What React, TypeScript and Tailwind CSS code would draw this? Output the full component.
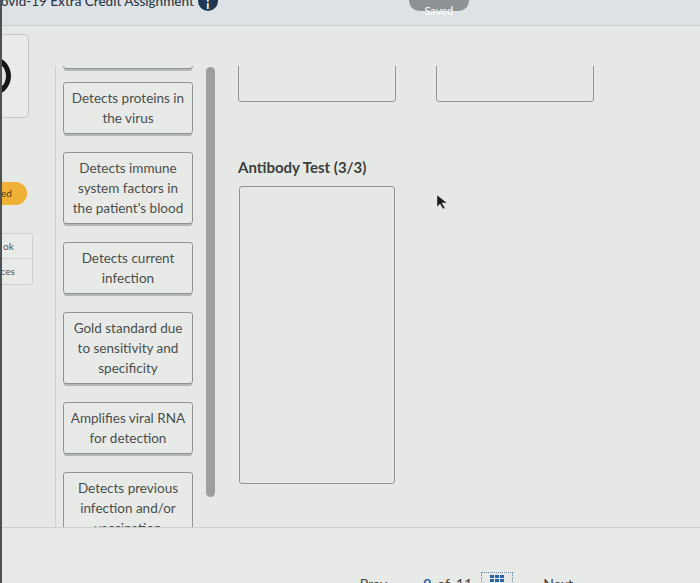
import React from 'react';

const cards = [
  ['Detects proteins in', 'the virus'],
  ['Detects immune', 'system factors in', "the patient's blood"],
  ['Detects current', 'infection'],
  ['Gold standard due', 'to sensitivity and', 'specificity'],
  ['Amplifies viral RNA', 'for detection'],
  ['Detects previous', 'infection and/or', 'vaccination'],
];

function Card({ lines }: { lines: string[] }) {
  return (
    <div className="w-[130px] shrink-0 rounded-[3px] border border-[#8f9594] bg-[#e8eae7] px-1 py-[5px] text-center text-[13.5px] leading-[20px] text-[#4a4e4d] shadow-[0_3px_0_-1px_#b3b7b6]">
      {lines.map((l) => (
        <div key={l}>{l}</div>
      ))}
    </div>
  );
}

export default function App() {
  return (
    <div className="relative flex h-[583px] w-[700px] flex-col overflow-hidden border-l-2 border-[#4d5152] bg-[#e6e8e5] font-['Lato',sans-serif]">
      {/* header */}
      <div className="flex h-[26px] shrink-0 items-start border-b border-[#c8ced1] bg-[#dce2e5]">
        <div className="-ml-[10px] -mt-[9px] shrink-0 whitespace-nowrap text-[13.5px] font-medium leading-[20px] text-[#2e3a45]">
          Covid-19 Extra Credit Assignment
        </div>
        <div className="ml-[4px] -mt-[9px] flex h-[20px] w-[20px] shrink-0 items-center justify-center rounded-full bg-[#1f3655] pt-[8px] text-[12px] font-bold text-white">
          i
        </div>
        <div className="ml-[191px] -mt-[10px] flex h-[21px] w-[60px] shrink-0 items-end justify-center rounded-full bg-[#8d9295] text-[11px] leading-[12px] text-white">
          <span className="-mb-[6px]">Saved</span>
        </div>
      </div>

      {/* body */}
      <div className="flex h-[501px] shrink-0">
        {/* left nav strip */}
        <div className="flex w-[31px] shrink-0 flex-col">
          <div className="-ml-[10px] mt-[8px] flex h-[84px] w-[37px] shrink-0 items-center rounded-[4px] border border-[#c6c9c8] bg-[#e9ebe8]">
            <div className="-ml-[4px] h-[40px] w-[22px] rounded-r-full border-[5px] border-l-0 border-[#151515] bg-[#e0e0e0]" />
          </div>
          <div className="-ml-[10px] mt-[64px] flex h-[23px] w-[35px] shrink-0 items-center rounded-full bg-[#efb237] pl-[9px] text-[10px] text-[#4a3a1a]">
            ed
          </div>
          <div className="-ml-[10px] mt-[28px] flex h-[52px] w-[41px] shrink-0 flex-col rounded-[3px] border border-[#d0d2d1] bg-[#e9ebe8] text-[10px] text-[#555]">
            <div className="flex h-[25px] items-center border-b border-[#d0d2d1] pl-[10px]">ok</div>
            <div className="flex flex-1 items-center pl-[2px]">nces</div>
          </div>
        </div>

        {/* main */}
        <div className="ml-[22px] mt-[40px] flex h-[461px] overflow-hidden">
          {/* draggable list */}
          <div className="flex w-[160px] shrink-0 border-l border-[#cfd2d1]">
            <div className="flex w-[150px] shrink-0 flex-col pl-[7px]">
              <div className="-mt-[40px] mb-[13px] h-[43px] w-[130px] shrink-0 rounded-[3px] border border-[#8f9594] shadow-[0_3px_0_-1px_#b3b7b6]" />
              <div className="flex shrink-0 flex-col gap-[18px]">
                {cards.map((c) => (
                  <Card key={c[0]} lines={c} />
                ))}
              </div>
            </div>
            <div className="mt-[1px] h-[430px] w-[9px] shrink-0 rounded-full bg-[#9c9f9e]" />
          </div>

          {/* drop zones */}
          <div className="ml-[23px] flex flex-col">
            <div className="-mt-[24px] flex shrink-0 gap-[40px]">
              <div className="h-[60px] w-[158px] rounded-[3px] border border-[#8f9594]" />
              <div className="h-[60px] w-[158px] rounded-[3px] border border-[#8f9594]" />
            </div>
            <div className="mt-[55px] shrink-0 text-[15px] font-bold leading-[20px] text-[#3b3f3f]">Antibody Test (3/3)</div>
            <div className="ml-[1px] mt-[9px] h-[298px] w-[156px] shrink-0 rounded-[3px] border border-[#8f9594]" />
          </div>
        </div>
      </div>

      {/* footer */}
      <div className="flex flex-1 items-start border-t border-[#cdd0cf] bg-[#e8eae7] pt-[48px] text-[14px] leading-[16px] text-[#444]">
        <div className="ml-[341px] flex items-center">
          <span className="text-[16px] font-bold text-[#2b5fa6]">‹</span>
          <span className="ml-[12px]">Prev</span>
        </div>
        <div className="ml-[36px] flex items-center">
          <span className="font-bold text-[#2b5fa6]">9</span>
          <span className="ml-[6px]">of</span>
          <span className="ml-[6px]">11</span>
        </div>
        <div className="ml-[9px] -mt-[4px] flex h-[14px] w-[32px] items-start justify-center border border-dotted border-[#6d87a8] pt-[2px]">
          <div className="grid grid-cols-3 gap-[1px]">
            {[0, 1, 2, 3, 4, 5].map((i) => (
              <div key={i} className="h-[3px] w-[4px] bg-[#2b5fa6]" />
            ))}
          </div>
        </div>
        <div className="ml-[30px] flex items-center">
          <span>Next</span>
          <span className="ml-[8px] text-[16px] font-bold text-[#2b5fa6]">›</span>
        </div>
      </div>

      {/* cursor */}
      <svg className="absolute left-[434px] top-[194px]" width="14" height="16" viewBox="0 0 14 16">
        <path d="M1 1 L1 13 L4 10 L7 15 L9 14 L6 9 L11 9 Z" fill="#1a1a1a" stroke="#ddd" strokeWidth="0.5" />
      </svg>
    </div>
  );
}
